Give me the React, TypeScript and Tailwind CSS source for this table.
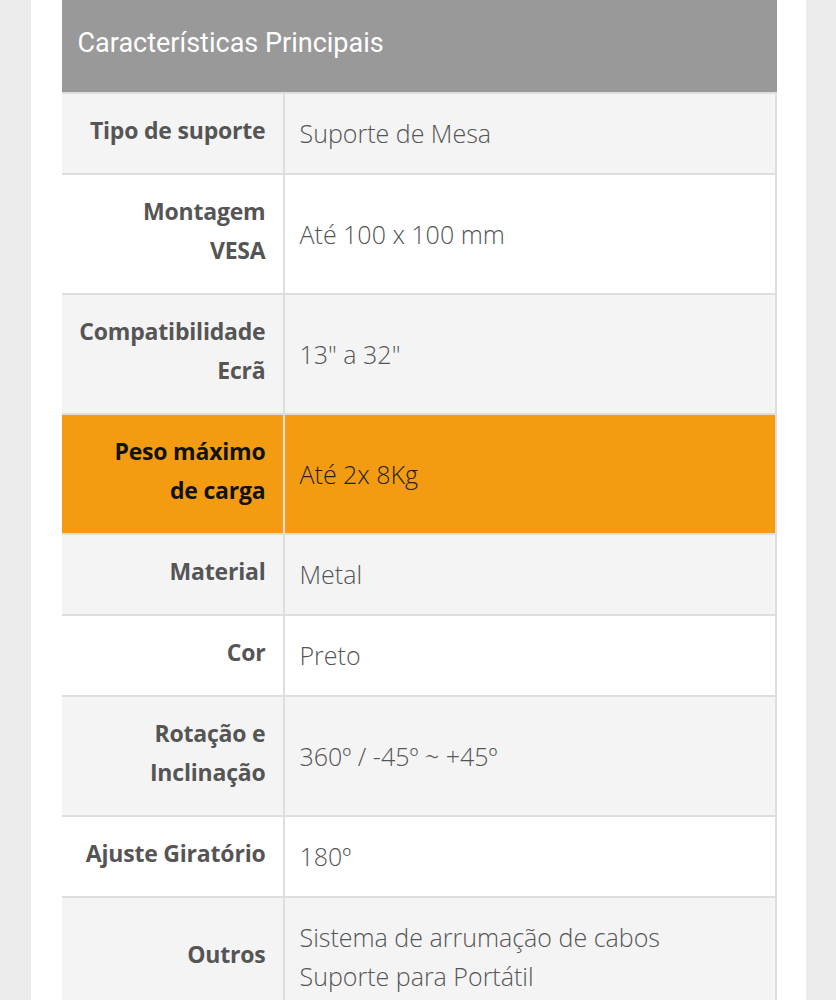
const rows = [
  { label: ["Tipo de suporte"], value: ["Suporte de Mesa"] },
  { label: ["Montagem", "VESA"], value: ["Até 100 x 100 mm"] },
  { label: ["Compatibilidade", "Ecrã"], value: ["13\" a 32\""] },
  { label: ["Peso máximo", "de carga"], value: ["Até 2x 8Kg"], highlight: true },
  { label: ["Material"], value: ["Metal"] },
  { label: ["Cor"], value: ["Preto"] },
  { label: ["Rotação e", "Inclinação"], value: ["360º / -45º ~ +45º"] },
  { label: ["Ajuste Giratório"], value: ["180º"] },
  {
    label: ["Outros"],
    value: ["Sistema de arrumação de cabos", "Suporte para Portátil"],
  },
];

export default function App() {
  return (
    <div className="min-h-screen bg-[#ececec]">
      <div className="mx-auto w-[775px] min-h-screen bg-white pl-[31px] pr-[29px]">
        <div className="bg-[#999999] h-[92px] pl-4 pb-[6px] flex items-center font-['Roboto',sans-serif] text-[27px] text-white">
          Características Principais
        </div>
        <div className="border-t-2 border-[#dedede] font-['Open_Sans','Noto_Sans',sans-serif]">
          {rows.map((row, i) => {
            const bg = row.highlight
              ? "bg-[#f39c12]"
              : i % 2 === 0
              ? "bg-[#f4f4f4]"
              : "bg-white";
            return (
              <div
                key={i}
                className={`grid grid-cols-[221px_1fr] border-b-2 border-r-2 border-[#dedede] ${bg}`}
              >
                <div
                  className={`pt-[17px] pb-[23px] pl-2 pr-[17px] flex flex-col justify-center items-end text-right text-[23px] leading-[39px] font-bold tracking-[-0.2px] ${
                    row.highlight ? "text-[#111111]" : "text-[#555555]"
                  }`}
                >
                  {row.label.map((l) => (
                    <span key={l} className="whitespace-nowrap">
                      {l}
                    </span>
                  ))}
                </div>
                <div
                  className={`border-l-2 border-[#dedede] py-5 pl-[15px] pr-3 flex flex-col justify-center text-[25px] leading-[39px] font-light ${
                    row.highlight ? "text-[#222222]" : "text-[#555555]"
                  }`}
                >
                  {row.value.map((v) => (
                    <span key={v} className="whitespace-nowrap">
                      {v}
                    </span>
                  ))}
                </div>
              </div>
            );
          })}
        </div>
      </div>
    </div>
  );
}
